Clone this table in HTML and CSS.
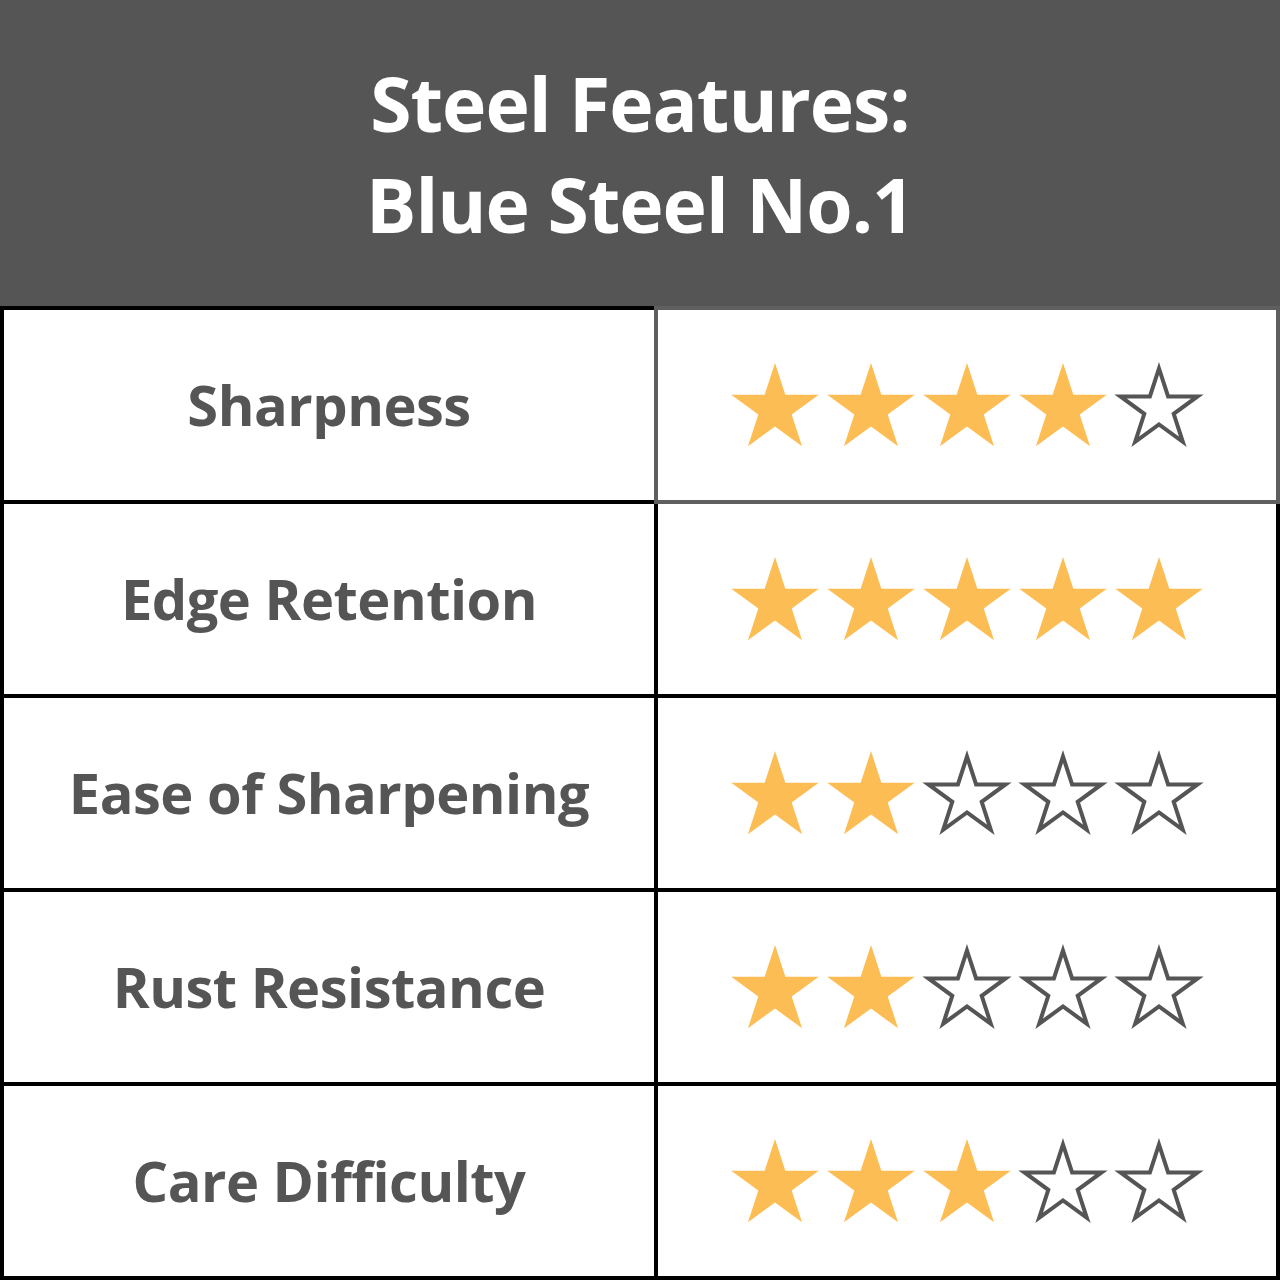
FILE: index.html
```html
<!DOCTYPE html>
<html lang="en">
<head>
<meta charset="utf-8">
<title>Steel Features: Blue Steel No.1</title>
<link rel="stylesheet" href="styles.css">
</head>
<body>
<svg width="0" height="0" class="defs" aria-hidden="true">
  <defs>
    <polygon id="star" points="0,-46 10.33,-14.21 43.75,-14.21 16.71,5.43 27.04,37.21 0,17.57 -27.04,37.21 -16.71,5.43 -43.75,-14.21 -10.33,-14.21"/>
    <polygon id="star-o" points="0,-40.5 9.09,-12.52 38.52,-12.52 14.71,4.78 23.81,32.77 0,15.47 -23.81,32.77 -14.71,4.78 -38.52,-12.52 -9.09,-12.52"/>
  </defs>
</svg>
<div class="page">
  <header class="header">
    <h1 class="title">Steel Features:<br>Blue Steel No.1</h1>
  </header>
  <div class="table">
    <div class="label">Sharpness</div>
    <div class="rating rating-first">
      <svg class="star" viewBox="-48 -50 96 92"><use href="#star" class="full"/></svg>
      <svg class="star" viewBox="-48 -50 96 92"><use href="#star" class="full"/></svg>
      <svg class="star" viewBox="-48 -50 96 92"><use href="#star" class="full"/></svg>
      <svg class="star" viewBox="-48 -50 96 92"><use href="#star" class="full"/></svg>
      <svg class="star" viewBox="-48 -50 96 92"><use href="#star-o" class="empty"/></svg>
    </div>

    <div class="label">Edge Retention</div>
    <div class="rating">
      <svg class="star" viewBox="-48 -50 96 92"><use href="#star" class="full"/></svg>
      <svg class="star" viewBox="-48 -50 96 92"><use href="#star" class="full"/></svg>
      <svg class="star" viewBox="-48 -50 96 92"><use href="#star" class="full"/></svg>
      <svg class="star" viewBox="-48 -50 96 92"><use href="#star" class="full"/></svg>
      <svg class="star" viewBox="-48 -50 96 92"><use href="#star" class="full"/></svg>
    </div>

    <div class="label">Ease of Sharpening</div>
    <div class="rating">
      <svg class="star" viewBox="-48 -50 96 92"><use href="#star" class="full"/></svg>
      <svg class="star" viewBox="-48 -50 96 92"><use href="#star" class="full"/></svg>
      <svg class="star" viewBox="-48 -50 96 92"><use href="#star-o" class="empty"/></svg>
      <svg class="star" viewBox="-48 -50 96 92"><use href="#star-o" class="empty"/></svg>
      <svg class="star" viewBox="-48 -50 96 92"><use href="#star-o" class="empty"/></svg>
    </div>

    <div class="label">Rust Resistance</div>
    <div class="rating">
      <svg class="star" viewBox="-48 -50 96 92"><use href="#star" class="full"/></svg>
      <svg class="star" viewBox="-48 -50 96 92"><use href="#star" class="full"/></svg>
      <svg class="star" viewBox="-48 -50 96 92"><use href="#star-o" class="empty"/></svg>
      <svg class="star" viewBox="-48 -50 96 92"><use href="#star-o" class="empty"/></svg>
      <svg class="star" viewBox="-48 -50 96 92"><use href="#star-o" class="empty"/></svg>
    </div>

    <div class="label">Care Difficulty</div>
    <div class="rating">
      <svg class="star" viewBox="-48 -50 96 92"><use href="#star" class="full"/></svg>
      <svg class="star" viewBox="-48 -50 96 92"><use href="#star" class="full"/></svg>
      <svg class="star" viewBox="-48 -50 96 92"><use href="#star" class="full"/></svg>
      <svg class="star" viewBox="-48 -50 96 92"><use href="#star-o" class="empty"/></svg>
      <svg class="star" viewBox="-48 -50 96 92"><use href="#star-o" class="empty"/></svg>
    </div>
  </div>
</div>
</body>
</html>
```

FILE: styles.css
```css
html, body {
  margin: 0;
  padding: 0;
  background: #ffffff;
}

.defs {
  position: absolute;
  width: 0;
  height: 0;
  overflow: hidden;
}

.page {
  width: 1280px;
  height: 1280px;
  display: flex;
  flex-direction: column;
  font-family: "Open Sans", "Noto Sans", "Liberation Sans", sans-serif;
}

.header {
  height: 306px;
  background: #555555;
  display: flex;
  align-items: center;
  justify-content: center;
}

.title {
  margin: 0;
  color: #ffffff;
  font-size: 75px;
  font-weight: 700;
  line-height: 101px;
  text-align: center;
  letter-spacing: -1px;
  padding-top: 2px;
}

.table {
  display: grid;
  grid-template-columns: 650px 618px;
  grid-template-rows: repeat(5, 190px);
  gap: 4px;
  padding: 4px;
  background: #000000;
}

.label {
  background: #ffffff;
  color: #555555;
  font-size: 56px;
  font-weight: 700;
  letter-spacing: -0.5px;
  display: flex;
  align-items: center;
  justify-content: center;
  padding-bottom: 2px;
}

.rating {
  background: #ffffff;
  display: flex;
  align-items: center;
  justify-content: center;
}

.rating-first {
  box-shadow: 0 0 0 4px #5f5f5f;
}

.star {
  width: 96px;
  height: 92px;
  display: block;
}

.full {
  fill: #fdbd55;
}

.empty {
  fill: #ffffff;
  stroke: #555555;
  stroke-width: 4;
  stroke-linejoin: miter;
}
```
